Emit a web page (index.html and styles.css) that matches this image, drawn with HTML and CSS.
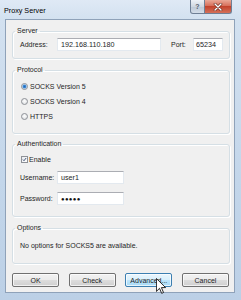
FILE: index.html
```html
<!DOCTYPE html>
<html>
<head>
<meta charset="utf-8">
<link rel="stylesheet" href="styles.css">
</head>
<body>
<div class="window">
  <div class="titlebar">
    <span class="title">Proxy Server</span>
    <div class="caption">
      <div class="cbtn help">?</div>
      <div class="cbtn close">
        <svg width="10" height="8" viewBox="0 0 10 8"><path d="M2 1 L8 7 M8 1 L2 7" stroke="#6a2a1e" stroke-width="2.6" stroke-linecap="round"/><path d="M2 1 L8 7 M8 1 L2 7" stroke="#fff" stroke-width="1.4" stroke-linecap="round"/></svg>
      </div>
    </div>
  </div>
  <div class="client">
    <fieldset class="group g-server">
      <legend>Server</legend>
      <div class="row">
        <span class="lbl">Address:</span>
        <div class="input addr">192.168.110.180</div>
        <span class="lbl port-lbl">Port:</span>
        <div class="input port">65234</div>
      </div>
    </fieldset>
    <fieldset class="group g-protocol">
      <legend>Protocol</legend>
      <div class="opt"><span class="radio on"></span>SOCKS Version 5</div>
      <div class="opt"><span class="radio"></span>SOCKS Version 4</div>
      <div class="opt"><span class="radio"></span>HTTPS</div>
    </fieldset>
    <fieldset class="group g-auth">
      <legend>Authentication</legend>
      <div class="chk-row"><span class="check"><svg width="7" height="7" viewBox="0 0 7 7"><path d="M1.3 3.6 L2.8 5.2 L5.8 1.4" fill="none" stroke="#2b3e63" stroke-width="1.2"/></svg></span>Enable</div>
      <div class="row user-row">
        <span class="lbl">Username:</span>
        <div class="input user">user1</div>
      </div>
      <div class="row pass-row">
        <span class="lbl">Password:</span>
        <div class="input user pass">●●●●●</div>
      </div>
    </fieldset>
    <fieldset class="group g-options">
      <legend>Options</legend>
      <div class="note">No options for SOCKS5 are available.</div>
    </fieldset>
    <div class="buttons">
      <div class="btn">OK</div>
      <div class="btn">Check</div>
      <div class="btn hot">Advanced...
        <svg class="cursor" width="10" height="16" viewBox="0 0 12 19"><path d="M0.5 0.5 L0.5 16 L4.2 12.3 L6.8 18.3 L9 17.3 L6.5 11.4 L11.5 11.4 Z" fill="#fff" stroke="#000" stroke-width="1"/></svg>
      </div>
      <div class="btn">Cancel</div>
    </div>
  </div>
</div>
</body>
</html>
```
FILE: styles.css
```css
* { box-sizing: border-box; }
html, body { margin: 0; padding: 0; }
body {
  width: 241px;
  height: 300px;
  overflow: hidden;
  font-family: "Liberation Sans", Arial, sans-serif;
  font-size: 7px;
  color: #1e1e1e;
}
.window {
  width: 241px;
  height: 300px;
  display: flex;
  flex-direction: column;
  background: linear-gradient(to bottom, #dfe9f5 0px, #d3e1f0 19px, #c3d6ea 60%, #bcd0e6 100%);
}
.titlebar {
  height: 19px;
  flex: none;
  display: flex;
  align-items: flex-start;
}
.title {
  padding: 6px 0 0 4px;
  font-size: 7.2px;
  line-height: 9px;
  color: #000;
}
.caption {
  margin-left: auto;
  margin-right: 9px;
  display: flex;
}
.cbtn {
  height: 14px;
  border: 1px solid #6f7f95;
  border-top: none;
  display: flex;
  align-items: center;
  justify-content: center;
}
.help {
  width: 15px;
  border-radius: 0 0 0 3px;
  background: linear-gradient(#eef2f7, #cfd8e2 50%, #bcc8d6 51%, #d4dde8);
  color: #55606e;
  font-weight: bold;
  font-size: 7px;
}
.close {
  width: 27px;
  border-left: none;
  border-radius: 0 0 3px 0;
  background: linear-gradient(#eaa897, #d76f5a 45%, #c3432c 50%, #d4705a 100%);
}
.client {
  flex: 1;
  margin: 0 6px 7px 5px;
  background: #f0f0f0;
  border: 1px solid #8fa2b9;
  display: flex;
  flex-direction: column;
}
.group {
  margin: 7px 4px 0 6px;
  padding: 3px 5px 7px 7px;
  border: 1px solid #d5dfe5;
  border-radius: 3px;
  min-width: 0;
  box-shadow: inset 1px 1px 0 #fff, 1px 1px 0 #fff;
}
.group legend {
  margin-left: -5px;
  padding: 0 2px;
  line-height: 8px;
  font-size: 7px;
}
.g-protocol { padding-top: 5px; padding-bottom: 9px; }
.g-auth { margin-top: 6px; padding-top: 5px; padding-bottom: 11px; }
.g-options { padding-top: 9px; padding-bottom: 12px; }
.row {
  display: flex;
  align-items: center;
}
.lbl { width: 37px; flex: none; }
.port-lbl { width: 22px; margin-left: 10px; }
.input {
  height: 13px;
  background: #fff;
  border: 1px solid #e3e9ef;
  border-top-color: #abadb3;
  display: flex;
  align-items: center;
  padding-left: 3px;
  font-size: 7.2px;
  flex: none;
}
.addr { width: 104px; }
.port { width: 30px; padding-left: 2px; }
.user { width: 67px; }
.pass { font-size: 6px; letter-spacing: 0.3px; color: #111; }
.user-row { margin-top: 6px; }
.pass-row { margin-top: 8px; }
.opt {
  height: 15px;
  display: flex;
  align-items: center;
}
.radio {
  width: 7px;
  height: 7px;
  border-radius: 50%;
  border: 1px solid #8e9197;
  background: radial-gradient(circle at 50% 40%, #ffffff, #d6d9dd);
  margin: 0 2px 0 1px;
  flex: none;
}
.radio.on {
  background: radial-gradient(circle, #1d66b8 0, #3f8ad6 1.4px, #b9d4ef 2.2px, #f2f4f6 3px);
}
.chk-row {
  height: 12px;
  display: flex;
  align-items: center;
}
.check {
  width: 7px;
  height: 7px;
  border: 1px solid #8e9197;
  background: linear-gradient(135deg, #e6eaef, #ffffff);
  margin: 0 1px 0 1px;
  display: flex;
  align-items: center;
  justify-content: center;
  flex: none;
}
.check svg { display: block; }
.note { line-height: 10px; }
.buttons {
  display: flex;
  justify-content: space-between;
  margin: 9px 5px 0 6px;
}
.btn {
  width: 47px;
  height: 14px;
  border: 1px solid #707070;
  border-radius: 2px;
  background: linear-gradient(#f2f2f2 0%, #ebebeb 50%, #dddddd 50%, #cfcfcf 100%);
  box-shadow: inset 0 0 0 1px rgba(255, 255, 255, 0.7);
  display: flex;
  align-items: center;
  justify-content: center;
  position: relative;
}
.btn.hot {
  border-color: #3c7fb1;
  background: linear-gradient(#eaf6fd 0%, #d9f0fc 50%, #bee6fd 50%, #a7d9f5 100%);
}
.cursor {
  position: absolute;
  left: 30px;
  top: 4px;
}
```
